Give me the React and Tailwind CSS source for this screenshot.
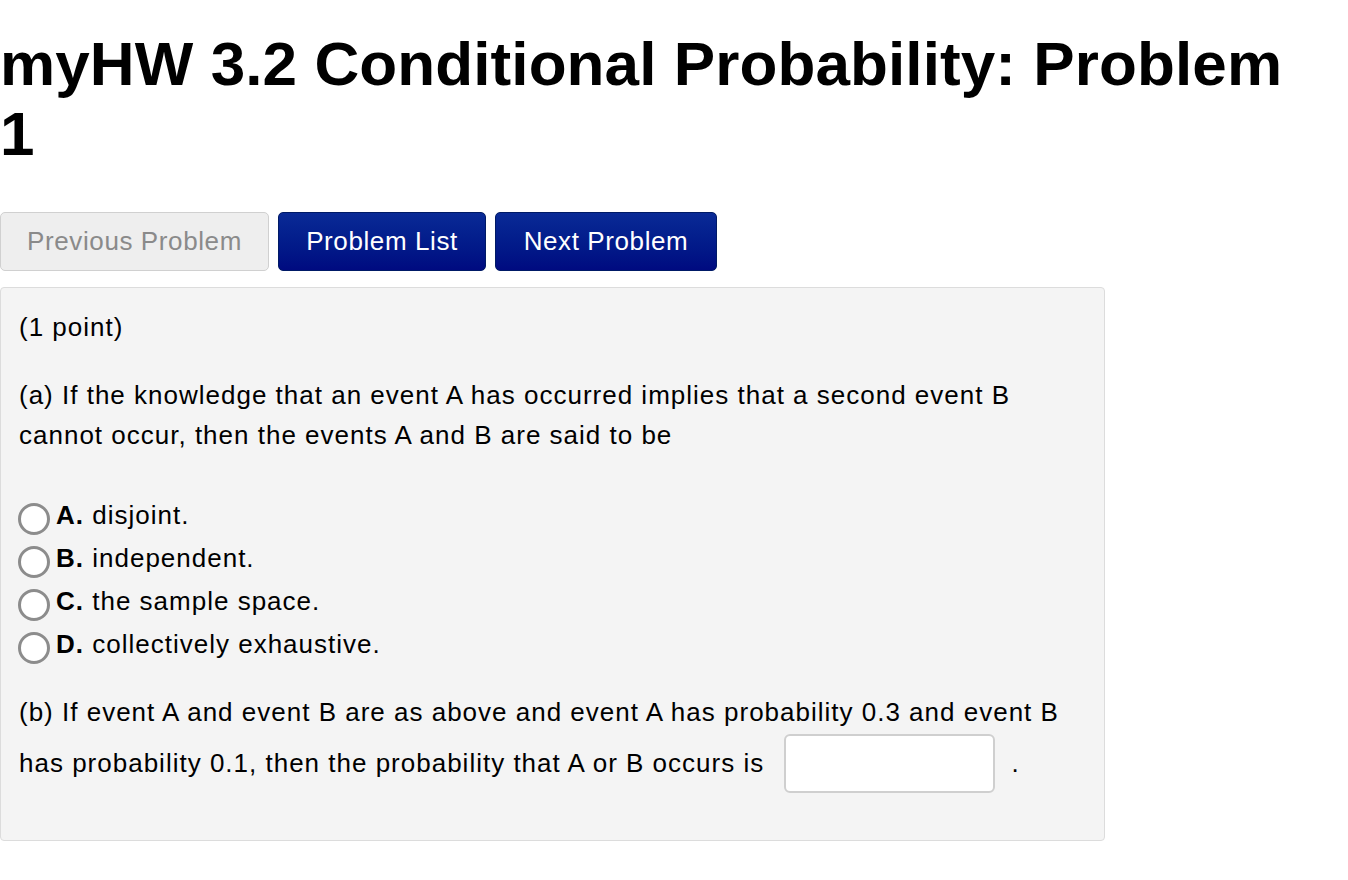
export default function App() {
  const opts = [
    ["A.", "disjoint."],
    ["B.", "independent."],
    ["C.", "the sample space."],
    ["D.", "collectively exhaustive."],
  ];
  return (
    <div className="bg-white min-h-[880px] w-[1348px] text-black font-['Liberation_Sans',Arial,sans-serif]">
      <h1 className="text-[62px] leading-[70px] font-bold pt-[29px] w-[1300px] tracking-[0.1px]">
        myHW 3.2 Conditional Probability: Problem 1
      </h1>
      <div className="flex gap-[9px] mt-[43px]">
        <button className="h-[59px] w-[269px] rounded-[5px] border border-[#d0d0d0] bg-[#eeeeee] text-[#8a8a8a] text-[26px] tracking-[0.6px]">
          Previous Problem
        </button>
        <button className="h-[59px] w-[208px] rounded-[5px] border border-[#001a66] bg-gradient-to-b from-[#0a2a96] to-[#000a80] text-white text-[26px] tracking-[0.6px]">
          Problem List
        </button>
        <button className="h-[59px] w-[222px] rounded-[5px] border border-[#001a66] bg-gradient-to-b from-[#0a2a96] to-[#000a80] text-white text-[26px] tracking-[0.6px]">
          Next Problem
        </button>
      </div>
      <div className="mt-[16px] w-[1105px] h-[554px] bg-[#f4f4f4] border border-[#dcdcdc] rounded-[4px] px-[18px] pt-[19px] text-[26px] leading-[40px] tracking-[1px]">
        <p>(1 point)</p>
        <p className="mt-[28px]">
          (a) If the knowledge that an event A has occurred implies that a second event B cannot occur, then the events A and B are said to be
        </p>
        <div className="mt-[38px] flex flex-col">
          {opts.map(([l, t]) => (
            <label key={l} className="flex items-center h-[43px] -ml-[1px]">
              <span className="w-[32px] h-[32px] shrink-0 rounded-full border-[3px] border-[#8c8c8c] bg-white mt-[9px] mr-[6px]"></span>
              <span className="leading-[30px]"><b>{l}</b> {t}</span>
            </label>
          ))}
        </div>
        <p className="mt-[23px] leading-[48px]">
          (b) If event A and event B are as above and event A has probability 0.3 and event B has probability 0.1, then the probability that A or B occurs is{" "}
          <span className="inline-block align-middle w-[211px] h-[59px] bg-white border-2 border-[#cfcfcf] rounded-[6px] ml-[12px] mr-[16px] -translate-y-[2px]"></span>
          .
        </p>
      </div>
    </div>
  );
}
